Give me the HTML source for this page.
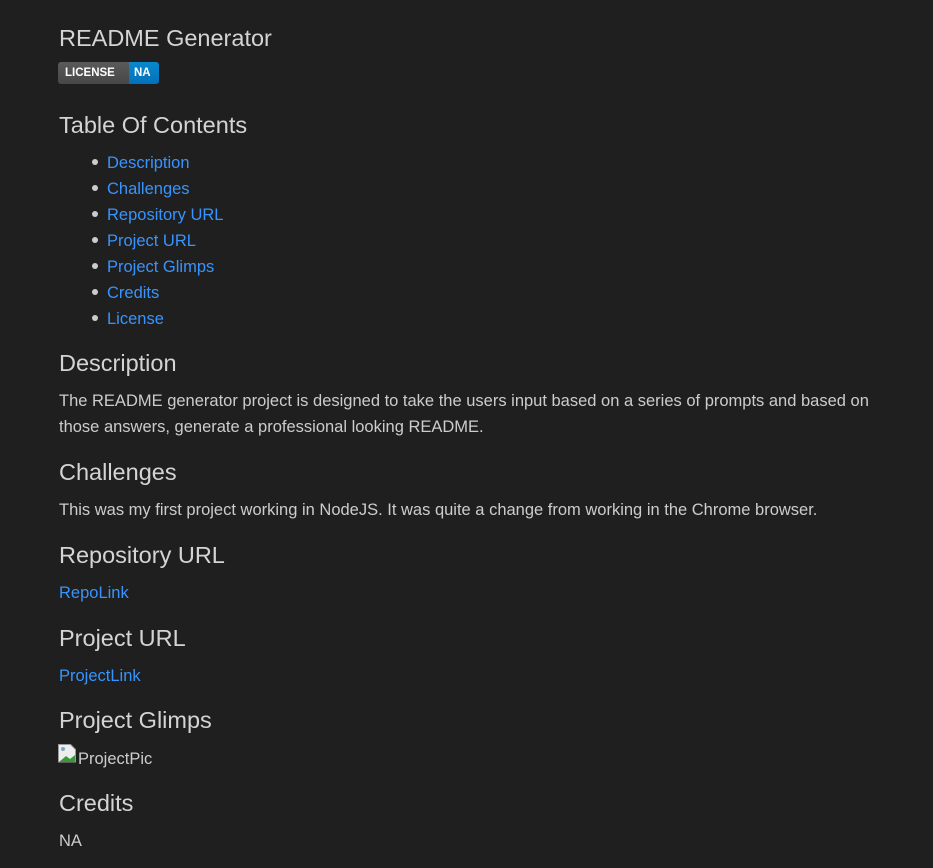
<!DOCTYPE html>
<html><head><meta charset="utf-8"><style>
body{margin:0;background:#1f1f1f;width:933px;height:868px;overflow:hidden;font-family:"Liberation Sans",sans-serif;color:#cccccc;position:relative}
.a{position:absolute;left:59px;white-space:nowrap}
.h{font-size:23.5px;line-height:30px;color:#d4d4d4}
.t{font-size:16.5px;line-height:26px}
.l{color:#3794ff}
.li{left:107px}
.b{position:absolute;left:92px;width:6px;height:6px;border-radius:50%;background:#cccccc}
</style></head><body>
<div class="a h" style="top:23px">README Generator</div>
<div style="position:absolute;left:58px;top:62px;height:22px;width:101px;border-radius:3px;overflow:hidden;display:flex;font:bold 11.5px/22px 'Liberation Sans',sans-serif;color:#fff">
<span style="background:linear-gradient(#5a5a5a,#474747);padding:0 4px 0 7px;width:60px">LICENSE</span><span style="background:linear-gradient(#0a88cf,#0272b8);padding:0 5px;flex:1">NA</span></div>
<div class="a h" style="top:110px">Table Of Contents</div>
<div class="b" style="top:159px"></div><div class="a t l li" style="top:150px">Description</div>
<div class="b" style="top:185px"></div><div class="a t l li" style="top:176px">Challenges</div>
<div class="b" style="top:211px"></div><div class="a t l li" style="top:202px">Repository URL</div>
<div class="b" style="top:237px"></div><div class="a t l li" style="top:228px">Project URL</div>
<div class="b" style="top:263px"></div><div class="a t l li" style="top:254px">Project Glimps</div>
<div class="b" style="top:289px"></div><div class="a t l li" style="top:280px">Credits</div>
<div class="b" style="top:315px"></div><div class="a t l li" style="top:306px">License</div>
<div class="a h" style="top:348px">Description</div>
<div class="a t" style="top:388px">The README generator project is designed to take the users input based on a series of prompts and based on</div>
<div class="a t" style="top:414px">those answers, generate a professional looking README.</div>
<div class="a h" style="top:457px">Challenges</div>
<div class="a t" style="top:497px">This was my first project working in NodeJS. It was quite a change from working in the Chrome browser.</div>
<div class="a h" style="top:540px">Repository URL</div>
<div class="a t l" style="top:580px">RepoLink</div>
<div class="a h" style="top:623px">Project URL</div>
<div class="a t l" style="top:663px">ProjectLink</div>
<div class="a h" style="top:705px">Project Glimps</div>
<svg style="position:absolute;left:58px;top:744px" width="20" height="19"><path d="M0.5 0.5h12l5 5v12.5h-17z" fill="#eee" stroke="#999"/><path d="M1 18l7-6 4 3 5-4v7z" fill="#3a9a3a"/><circle cx="5" cy="5" r="2" fill="#7ab"/></svg>
<div class="a t" style="top:746px;left:78px">ProjectPic</div>
<div class="a h" style="top:788px">Credits</div>
<div class="a t" style="top:828px">NA</div>
</body></html>
